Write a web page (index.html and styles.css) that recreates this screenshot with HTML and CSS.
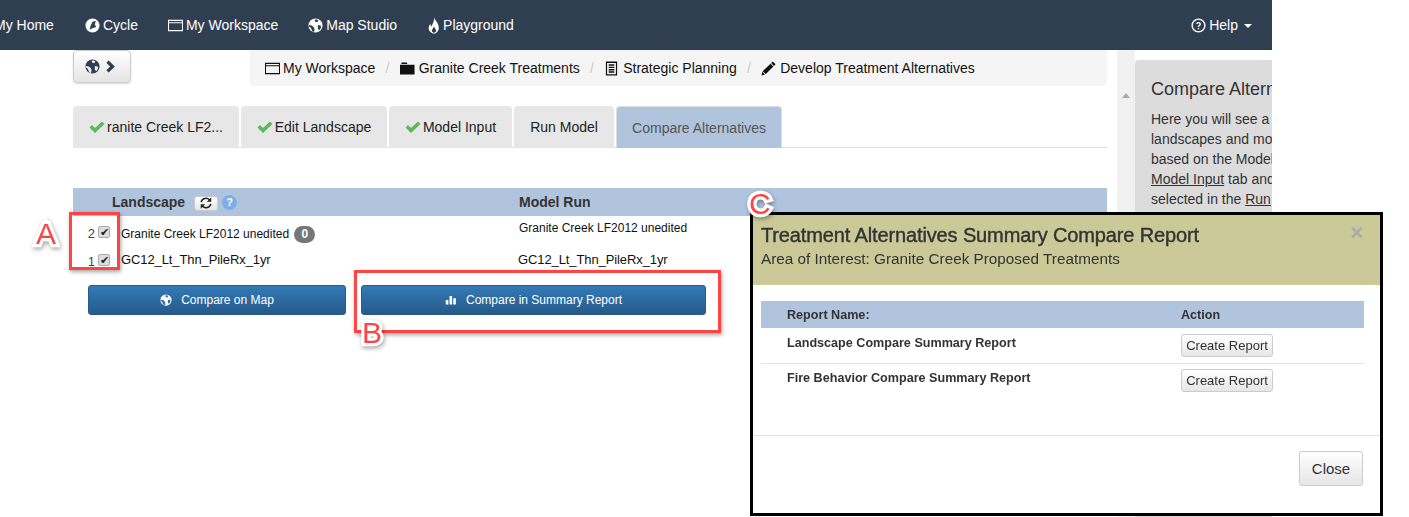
FILE: index.html
```html
<!DOCTYPE html>
<html lang="en">
<head>
    <meta charset="UTF-8">
    <title>Compare Alternatives</title>
    <link rel="stylesheet" href="styles.css">
</head>
<body>
    <svg class="sprites" width="0" height="0">
        <symbol id="i-globe" viewBox="0 0 16 16"><circle cx="8" cy="8" r="7.500" fill="currentColor"/><path d="M8.500 1.200 11 2.500 10 4.500 8 4 7 2.500ZM1 7.500 4 8l2 1.500 1 2-.5 3.500-2-1-1.500-3.500L1 9ZM10.500 7.500l3 .5.5 2-2 3-1.500-1.500Z" fill="var(--cut)"/></symbol>
        <symbol id="i-window" viewBox="0 0 16 16"><path d="M.5 2.500h15v11H.5ZM.5 5h15" fill="none" stroke="currentColor" stroke-width="1.200"/></symbol>
        <symbol id="i-folder" viewBox="0 0 16 16"><path d="M0 4h15.500v10.500H0ZM1.500 1.500h5.500l1 1.800H1.500Z" fill="currentColor"/></symbol>
        <symbol id="i-list" viewBox="0 0 16 16"><path d="M2 .5h12v15H2ZM3.300 2v12h9.400V2ZM5 3.500h6V5H5ZM5 6h6v1.500H5ZM5 8.500h6V10H5ZM5 11h6v1.500H5Z" fill="currentColor" fill-rule="evenodd"/></symbol>
        <symbol id="i-pencil" viewBox="0 0 16 16"><path d="M12.500.5 15.500 3.500 13.800 5.200 10.800 2.200ZM10.200 2.800l3 3-8 8-3.500-3ZM1.300 11.500l3 2.800L.5 15.500Z" fill="currentColor"/></symbol>
        <symbol id="i-ok" viewBox="0 0 16 16"><path d="M.5 8.500 3 6l3 3L13 2.500 15.500 5 6 14Z" fill="currentColor"/></symbol>
        <symbol id="i-fire" viewBox="2.500 0 11 16"><path d="M8 .5c1 3 4.500 5 4.500 9.500 0 3-2 5.500-4.500 5.500S3 13 3 10.500c0-2 1-3 1.500-4 .5 1 .5 2 1.200 2.500C6.500 6.500 8.500 4 8 .5ZM8 9c-.5 1.500-2 2.500-2 4 0 1 1 1.800 2 1.800s2-.8 2-1.800C10 11.500 8.500 10.500 8 9Z" fill="currentColor" fill-rule="evenodd"/></symbol>
        <symbol id="i-cycle" viewBox="0 0 16 16"><path d="M8 .5a7.500 7.500 0 1 0 0 15 7.500 7.500 0 0 0 0-15ZM8 4l3.500-1L10.500 7 12 9.500 8 11 5 12.500 6 8Z" fill="currentColor" fill-rule="evenodd"/></symbol>
        <symbol id="i-help" viewBox="0 0 16 16"><circle cx="8" cy="8" r="6.800" fill="none" stroke="currentColor" stroke-width="1.500"/><path d="M5.500 6.300C5.700 4.800 6.800 4.200 8 4.200c1.500 0 2.600.9 2.600 2.200 0 1.800-2 1.800-2 3.300H7.200c0-2.200 1.900-2.200 1.900-3.300 0-.5-.5-.9-1.100-.9s-1 .4-1.100 1ZM7.200 10.600h1.500V12H7.200Z" fill="currentColor"/></symbol>
        <symbol id="i-refresh" viewBox="0 0 16 16"><path d="M2.500 7A5.500 5.500 0 0 1 12 4.500M13.500 9A5.500 5.500 0 0 1 4 11.500" fill="none" stroke="currentColor" stroke-width="1.800"/><path d="M14 1.500V6.500H9ZM2 14.500V9.500H7Z" fill="currentColor"/></symbol>
        <symbol id="i-stats" viewBox="0 0 16 16"><path d="M1 8h3.500v6H1ZM6 2.500h3.500V14H6ZM11 5.500h3.500V14H11Z" fill="currentColor"/></symbol>
        <symbol id="i-chevron" viewBox="0 0 16 16"><path d="M5 1.500 11.500 8 5 14.500 2.500 12l4-4-4-4Z" fill="currentColor"/></symbol>
    </svg>

    <div class="page">
        <nav class="topbar">
            <a class="topbar-item topbar-home">My Home</a>
            <a class="topbar-item"><svg class="icon"><use href="#i-cycle"/></svg>Cycle</a>
            <a class="topbar-item"><svg class="icon"><use href="#i-window"/></svg>My Workspace</a>
            <a class="topbar-item"><svg class="icon"><use href="#i-globe"/></svg>Map Studio</a>
            <a class="topbar-item"><svg class="icon icon-fire"><use href="#i-fire"/></svg>Playground</a>
            <a class="topbar-item topbar-help"><svg class="icon"><use href="#i-help"/></svg>Help<span class="caret"></span></a>
        </nav>

        <div class="layout">
            <main class="main">
                <div class="toolbar">
                    <button class="map-toggle"><svg class="icon"><use href="#i-globe"/></svg><svg class="icon chevron"><use href="#i-chevron"/></svg></button>
                    <ol class="breadcrumb">
                        <li><svg class="icon"><use href="#i-window"/></svg>My Workspace</li>
                        <li><svg class="icon"><use href="#i-folder"/></svg>Granite Creek Treatments</li>
                        <li><svg class="icon"><use href="#i-list"/></svg>Strategic Planning</li>
                        <li><svg class="icon"><use href="#i-pencil"/></svg>Develop Treatment Alternatives</li>
                    </ol>
                </div>

                <ul class="tabs">
                    <li class="tab tab-1"><svg class="icon check"><use href="#i-ok"/></svg>ranite Creek LF2...</li>
                    <li class="tab tab-2"><svg class="icon check"><use href="#i-ok"/></svg>Edit Landscape</li>
                    <li class="tab tab-3"><svg class="icon check"><use href="#i-ok"/></svg>Model Input</li>
                    <li class="tab tab-4">Run Model</li>
                    <li class="tab tab-5 active">Compare Alternatives</li>
                </ul>

                <div class="runs">
                    <div class="runs-head">
                        <div class="col-land"><span>Landscape</span><button class="mini-btn"><svg class="icon"><use href="#i-refresh"/></svg></button><span class="hint">?</span></div>
                        <div class="col-run">Model Run</div>
                    </div>
                    <div class="run-row run-row-1">
                        <div class="col-num">2</div>
                        <div class="col-check"><span class="fake-check">✔</span></div>
                        <div class="col-name">Granite Creek LF2012 unedited <span class="badge">0</span></div>
                        <div class="col-run run-up">Granite Creek LF2012 unedited</div>
                    </div>
                    <div class="run-row run-row-2">
                        <div class="col-num">1</div>
                        <div class="col-check"><span class="fake-check">✔</span></div>
                        <div class="col-name">GC12_Lt_Thn_PileRx_1yr</div>
                        <div class="col-run">GC12_Lt_Thn_PileRx_1yr</div>
                    </div>
                    <div class="compare-btns">
                        <button class="btn-blue btn-map"><svg class="icon"><use href="#i-globe"/></svg>Compare on Map</button>
                        <button class="btn-blue btn-summary"><svg class="icon"><use href="#i-stats"/></svg>Compare in Summary Report</button>
                    </div>
                </div>
            </main>

            <div class="scroll-gutter"><span class="scroll-arrow"></span></div>

            <aside class="help-panel">
                <h4>Compare Alternatives</h4>
                <p>Here you will see a list<br>landscapes and model<br>based on the Model<br><u>Model Input</u> tab and<br>selected in the <u>Run</u></p>
            </aside>
        </div>
    </div>

    <!-- annotations sit on top of the page -->
    <div class="mark mark-a"></div>
    <div class="mark mark-b"></div>
    <span class="letter letter-a">A</span>
    <span class="letter letter-b">B</span>

    <section class="report">
        <header class="report-head">
            <h3>Treatment Alternatives Summary Compare Report</h3>
            <p>Area of Interest: Granite Creek Proposed Treatments</p>
            <span class="report-x">×</span>
        </header>
        <div class="report-body">
            <table class="report-table">
                <thead>
                    <tr><th>Report Name:</th><th>Action</th></tr>
                </thead>
                <tbody>
                    <tr><td>Landscape Compare Summary Report</td><td><button class="btn-plain">Create Report</button></td></tr>
                    <tr><td>Fire Behavior Compare Summary Report</td><td><button class="btn-plain">Create Report</button></td></tr>
                </tbody>
            </table>
        </div>
        <footer class="report-foot"><button class="btn-plain btn-close">Close</button></footer>
    </section>
    <span class="letter letter-c">C</span>
</body>
</html>
```

FILE: styles.css
```css
* {
    box-sizing: border-box;
}
html, body {
    margin: 0;
    height: 517px;
    overflow: hidden;
}
body {
    font-family: "Liberation Sans", Arial, sans-serif;
    font-size: 14px;
    line-height: 20px;
    color: #222;
    background: #fff;
    position: relative;
}
button {
    font-family: inherit;
}
.sprites {
    position: absolute;
}
.icon {
    width: 15px;
    height: 15px;
    display: inline-block;
    vertical-align: -3px;
    margin-right: 3px;
}
.page {
    width: 1272px;
    height: 517px;
    overflow: hidden;
}

/* top bar */
.topbar {
    --cut: #2f3e50;
    height: 50px;
    background: #2f3e50;
    color: #fff;
    display: flex;
    align-items: center;
    margin-left: -6px;
}
.topbar-item {
    margin-right: 30px;
}
.topbar-home {
    margin-right: 31px;
}
.topbar-help {
    margin-left: auto;
    margin-right: 20px;
}
.icon-fire {
    width: 14px;
    height: 17px;
    margin-right: 2px;
    vertical-align: -4px;
}
.caret {
    display: inline-block;
    width: 0;
    height: 0;
    margin-left: 6px;
    vertical-align: 2px;
    border-top: 4px solid #fff;
    border-left: 4px solid transparent;
    border-right: 4px solid transparent;
}

.layout {
    display: flex;
    height: 467px;
}
.main {
    width: 1034px;
    margin-left: 73px;
    flex: none;
}

/* breadcrumb row */
.toolbar {
    display: flex;
    align-items: flex-start;
}
.map-toggle {
    --cut: #f2f2f2;
    width: 58px;
    height: 33px;
    padding: 0;
    display: flex;
    align-items: center;
    justify-content: center;
    border: 1px solid #ccc;
    border-radius: 4px;
    background: linear-gradient(#fff, #e4e4e4);
    box-shadow: 0 1px 2px rgba(0, 0, 0, 0.15);
    color: #2f3e50;
}
.map-toggle .icon {
    margin-right: 4px;
}
.map-toggle .chevron {
    margin-right: 0;
}
.breadcrumb {
    list-style: none;
    margin: 0 0 0 119px;
    padding: 0 15px;
    flex: 1;
    height: 36px;
    display: flex;
    align-items: center;
    background: #f5f5f5;
    border-radius: 0 0 4px 4px;
    color: #111;
}
.breadcrumb .icon {
    margin-right: 4px;
}
.breadcrumb li:first-child .icon {
    margin-right: 3px;
}
.breadcrumb li + li::before {
    content: "/";
    color: #ccc;
    padding: 0 10.25px;
}

/* tabs */
.tabs {
    list-style: none;
    margin: 20px 0 0;
    padding: 0;
    height: 42px;
    display: flex;
    gap: 2px;
    border-bottom: 1px solid #ddd;
}
.tab {
    height: 42px;
    padding-top: 11px;
    text-align: center;
    background: #e7e7e7;
    border-radius: 4px 4px 0 0;
    color: #222;
}
.tab-1 { width: 166px; }
.tab-2 { width: 146px; }
.tab-3 { width: 123px; }
.tab-4 { width: 100px; }
.tab-5 { width: 166px; }
.tab.active {
    background: #b0c4de;
    color: #555;
    border: 1px solid #ddd;
    border-bottom: 0;
}
.check {
    width: 16px;
    height: 16px;
    margin-right: 2px;
    color: #5cb85c;
}

/* landscape and run table */
.runs {
    margin-top: 40px;
}
.runs-head {
    height: 28px;
    background: #b0c4de;
    display: flex;
    align-items: center;
    font-weight: bold;
    color: #333;
}
.col-land {
    width: 446px;
    padding-left: 39px;
    display: flex;
    align-items: center;
}
.mini-btn {
    width: 24px;
    height: 15px;
    padding: 0;
    margin: 2px 4px 0 9px;
    border: 1px solid #ccc;
    border-radius: 3px;
    background: linear-gradient(#fff, #e6e6e6);
    color: #222;
    display: flex;
    align-items: center;
    justify-content: center;
}
.mini-btn .icon {
    width: 14px;
    height: 14px;
    margin: 0;
}
.hint {
    width: 15px;
    height: 15px;
    margin-top: 1px;
    border-radius: 50%;
    background: #7eaee8;
    color: #fff;
    font-size: 11px;
    line-height: 15px;
    text-align: center;
}
.run-row {
    display: flex;
    font-size: 12px;
    color: #111;
}
.run-row-1 {
    height: 34px;
    padding-top: 8px;
}
.run-row-2 {
    height: 35px;
    font-size: 13px;
    letter-spacing: -0.1px;
}
.col-num {
    width: 22px;
    text-align: right;
    font-size: 13px;
    color: #444;
}
.run-row-2 .col-num {
    margin-top: 2px;
}
.col-check {
    width: 26px;
    padding-left: 3px;
}
.fake-check {
    display: block;
    width: 12px;
    height: 12px;
    margin-top: 2px;
    border: 1px solid #aaa;
    border-radius: 2px;
    background: #ddd;
    font-size: 11px;
    line-height: 10px;
    text-align: center;
    color: #222;
}
.run-row-2 .fake-check {
    margin-top: 4px;
}
.col-name {
    width: 398px;
}
.run-up {
    margin-top: -6px;
}
.run-row-2 .col-run {
    margin-left: -1px;
}
.badge {
    display: inline-block;
    min-width: 21px;
    height: 17px;
    margin-left: 2px;
    padding: 0 6px;
    border-radius: 9px;
    background: #777;
    color: #fff;
    font-size: 12px;
    font-weight: bold;
    line-height: 17px;
    text-align: center;
}
.compare-btns {
    display: flex;
    margin-left: 15px;
    gap: 15px;
}
.btn-blue {
    --cut: #2c6aa0;
    height: 30px;
    border: 1px solid #265a88;
    border-radius: 3px;
    background: linear-gradient(#337ab7, #265a88);
    color: #fff;
    font-size: 12px;
}
.btn-blue .icon {
    width: 12px;
    height: 12px;
    margin-right: 9px;
    vertical-align: -2px;
}
.btn-map { width: 258px; }
.btn-summary { width: 345px; }

/* right column */
.scroll-gutter {
    width: 18px;
    margin-left: 10px;
    background: #f1f1f1;
    flex: none;
}
.scroll-arrow {
    display: block;
    width: 0;
    margin: 43px auto 0;
    border-bottom: 5px solid #a8a8a8;
    border-left: 4px solid transparent;
    border-right: 4px solid transparent;
}
.help-panel {
    width: 137px;
    flex: none;
    margin-top: 10px;
    padding: 17px 0 0 16px;
    background: #dcdcdc;
    border-radius: 4px 0 0 0;
    white-space: nowrap;
    overflow: hidden;
    color: #333;
}
.help-panel h4 {
    margin: 0 0 8px;
    font-size: 18px;
    font-weight: normal;
    line-height: 24px;
}
.help-panel p {
    margin: 0;
}

/* annotations */
.mark {
    position: absolute;
    border: 3px solid #f44;
    box-shadow: 1px 2px 4px rgba(0, 0, 0, 0.35);
}
.mark-a {
    left: 69px;
    top: 212px;
    width: 51px;
    height: 58px;
}
.mark-b {
    left: 354px;
    top: 270px;
    width: 367px;
    height: 63px;
}
.letter {
    position: absolute;
    font-size: 30px;
    line-height: 30px;
    color: #f44;
    -webkit-text-stroke: 6.5px #fff;
    paint-order: stroke fill;
    filter: drop-shadow(1px 2px 2px rgba(0, 0, 0, 0.35));
}
.letter-a { left: 36px; top: 219px; }
.letter-b { left: 362px; top: 318px; }
.letter-c { left: 749px; top: 189px; }

/* report dialog */
.report {
    position: absolute;
    left: 750px;
    top: 212px;
    width: 633px;
    height: 304px;
    border: 3px solid #000;
    background: #fff;
    color: #333;
    display: flex;
    flex-direction: column;
}
.report-head {
    position: relative;
    height: 70px;
    padding: 9px 8px 0;
    background: #cbc998;
}
.report-head h3 {
    margin: 0;
    font-size: 20px;
    font-weight: normal;
    letter-spacing: -0.13px;
    line-height: 22px;
    -webkit-text-stroke: 0.4px #333;
    filter: blur(0.3px);
}
.report-head p {
    margin: 3px 0 0;
    font-size: 15.3px;
    line-height: 20px;
    filter: blur(0.3px);
}
.report-x {
    position: absolute;
    right: 17px;
    top: 8px;
    font-size: 22px;
    font-weight: bold;
    color: #aaa;
}
.report-body {
    flex: 1;
    padding: 16px 8px 0;
}
.report-table {
    width: 603px;
    border-collapse: collapse;
    font-size: 12.6px;
    font-weight: bold;
    filter: blur(0.3px);
}
.report-table th {
    height: 27px;
    background: #b0c4de;
    text-align: left;
    padding: 0 0 0 26px;
}
.report-table th + th,
.report-table td + td {
    width: 183px;
    padding-left: 0;
}
.report-table td {
    height: 35px;
    padding: 5px 0 4px 26px;
    vertical-align: top;
}
.report-table tbody tr + tr td {
    padding-top: 4px;
}
.report-table tbody tr:first-child td {
    border-bottom: 1px solid #e5e5e5;
}
.report-table td + td {
    padding: 6px 0 0;
}
.report-table tbody tr + tr td + td {
    padding-top: 5px;
}
.btn-plain {
    height: 23px;
    width: 92px;
    padding: 0;
    border: 1px solid #ccc;
    border-radius: 3px;
    background: linear-gradient(#fff, #e6e6e6);
    color: #333;
    font-size: 13px;
}
.report-foot {
    height: 78px;
    padding: 15px 17px 0 0;
    border-top: 1px solid #e5e5e5;
    text-align: right;
}
.btn-close {
    width: 64px;
    height: 35px;
    font-size: 15px;
}
```
